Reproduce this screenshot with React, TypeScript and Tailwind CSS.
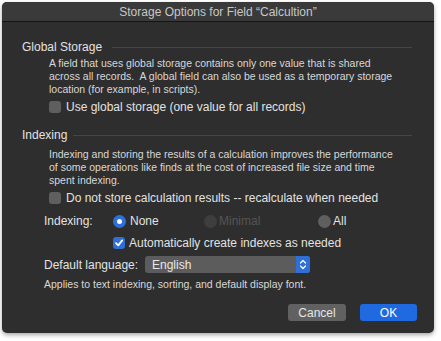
import React from "react";

const font = { fontFamily: '"Liberation Sans", Arial, sans-serif' };

function Checkbox({ checked = false }: { checked?: boolean }) {
  if (checked) {
    return (
      <div className="w-[12px] h-[12px] rounded-[3px] bg-[#2f6fd8] flex items-center justify-center shrink-0">
        <svg width="10" height="10" viewBox="0 0 10 10">
          <path d="M2 5.2 L4.2 7.4 L8.2 2.4" stroke="#fff" strokeWidth="1.8" fill="none" strokeLinecap="round" strokeLinejoin="round" />
        </svg>
      </div>
    );
  }
  return <div className="w-[12px] h-[12px] rounded-[3px] bg-[#5f5f5f] shrink-0" />;
}

function Radio({ on = false, disabled = false }: { on?: boolean; disabled?: boolean }) {
  if (on) {
    return (
      <div className="w-[13px] h-[13px] rounded-full bg-[#2f6fd8] flex items-center justify-center shrink-0">
        <div className="w-[5px] h-[5px] rounded-full bg-white" />
      </div>
    );
  }
  return <div className={`w-[13px] h-[13px] rounded-full shrink-0 ${disabled ? "bg-[#3e3e3e]" : "bg-[#5f5f5f]"}`} />;
}

function Section({ title, gap }: { title: string; gap: string }) {
  return (
    <div className="flex items-center h-[16px] pl-[20px] pr-[22px]">
      <span className="text-[12px] text-[#e2e2e2] whitespace-nowrap">{title}</span>
      <div className={`flex-1 h-px bg-[#464646] ${gap}`} />
    </div>
  );
}

export default function App() {
  return (
    <div className="w-[441px] h-[341px] bg-white pl-[2px] pt-[2px]" style={font}>
      <div className="w-[432px] h-[331px] rounded-[5px] bg-[#2e2e2e] shadow-[0_2px_4px_rgba(0,0,0,0.35)] overflow-hidden flex flex-col">
        <div className="h-[20px] bg-[#3a3a3a] border-b border-[#141414] flex items-center justify-center text-[12px] text-[#c8c8c8]">
          Storage Options for Field “Calcultion”
        </div>
        <div className="flex flex-col">
          <div className="mt-[17px]">
            <Section title="Global Storage" gap="ml-[10px]" />
          </div>
          <div className="pl-[47px] pr-[39px] mt-[2px] text-[10.5px] leading-[13px] text-[#d8d8d8]">
            A field that uses global storage contains only one value that is shared across all records.&nbsp; A global field can also be used as a temporary storage location (for example, in scripts).
          </div>
          <div className="pl-[47px] mt-[3px] flex items-center gap-[5px] h-[16px]">
            <Checkbox />
            <span className="text-[12px] text-[#e2e2e2] whitespace-nowrap">Use global storage (one value for all records)</span>
          </div>
          <div className="mt-[12px]">
            <Section title="Indexing" gap="ml-[6px]" />
          </div>
          <div className="pl-[47px] pr-[39px] mt-[5px] text-[10.5px] leading-[13px] text-[#d8d8d8]">
            Indexing and storing the results of a calculation improves the performance of some operations like finds at the cost of increased file size and time spent indexing.
          </div>
          <div className="pl-[47px] mt-[3px] flex items-center gap-[5px] h-[16px]">
            <Checkbox />
            <span className="text-[12px] text-[#e2e2e2] whitespace-nowrap">Do not store calculation results -- recalculate when needed</span>
          </div>
          <div className="pl-[42px] mt-[7px] flex items-center h-[16px] text-[12px]">
            <span className="w-[69px] text-[#e2e2e2]">Indexing:</span>
            <div className="w-[91px] flex items-center gap-[4px]">
              <Radio on />
              <span className="text-[#e2e2e2]">None</span>
            </div>
            <div className="w-[114px] flex items-center gap-[2px]">
              <Radio disabled />
              <span className="text-[#555555]">Minimal</span>
            </div>
            <div className="flex items-center gap-[2px]">
              <Radio />
              <span className="text-[#e2e2e2]">All</span>
            </div>
          </div>
          <div className="pl-[111px] mt-[6px] flex items-center gap-[4px] h-[16px]">
            <Checkbox checked />
            <span className="text-[12px] text-[#e2e2e2] whitespace-nowrap">Automatically create indexes as needed</span>
          </div>
          <div className="pl-[42px] mt-[5px] flex items-center h-[17px]">
            <span className="w-[101px] text-[12px] text-[#e2e2e2] whitespace-nowrap">Default language:</span>
            <div className="w-[165px] h-[17px] rounded-[3px] bg-[#5c5c5c] flex items-center justify-between">
              <span className="pl-[7px] text-[12px] text-[#e8e8e8]">English</span>
              <div className="w-[14px] h-[17px] rounded-r-[3px] bg-[#2f6fd8] flex items-center justify-center">
                <svg width="8" height="11" viewBox="0 0 8 11">
                  <path d="M1.5 4 L4 1.5 L6.5 4 M1.5 7 L4 9.5 L6.5 7" stroke="#fff" strokeWidth="1.2" fill="none" strokeLinecap="round" strokeLinejoin="round" />
                </svg>
              </div>
            </div>
          </div>
          <div className="pl-[42px] mt-[5px] text-[10.5px] leading-[13px] text-[#d8d8d8]">
            Applies to text indexing, sorting, and default display font.
          </div>
          <div className="mt-[13px] pr-[17px] flex justify-end gap-[14px]">
            <div className="w-[58px] h-[17px] rounded-[3px] bg-[#616161] flex items-center justify-center text-[12px] text-[#e6e6e6]">Cancel</div>
            <div className="w-[57px] h-[17px] rounded-[3px] bg-[#1f6ae0] flex items-center justify-center text-[12px] text-white">OK</div>
          </div>
        </div>
      </div>
    </div>
  );
}
